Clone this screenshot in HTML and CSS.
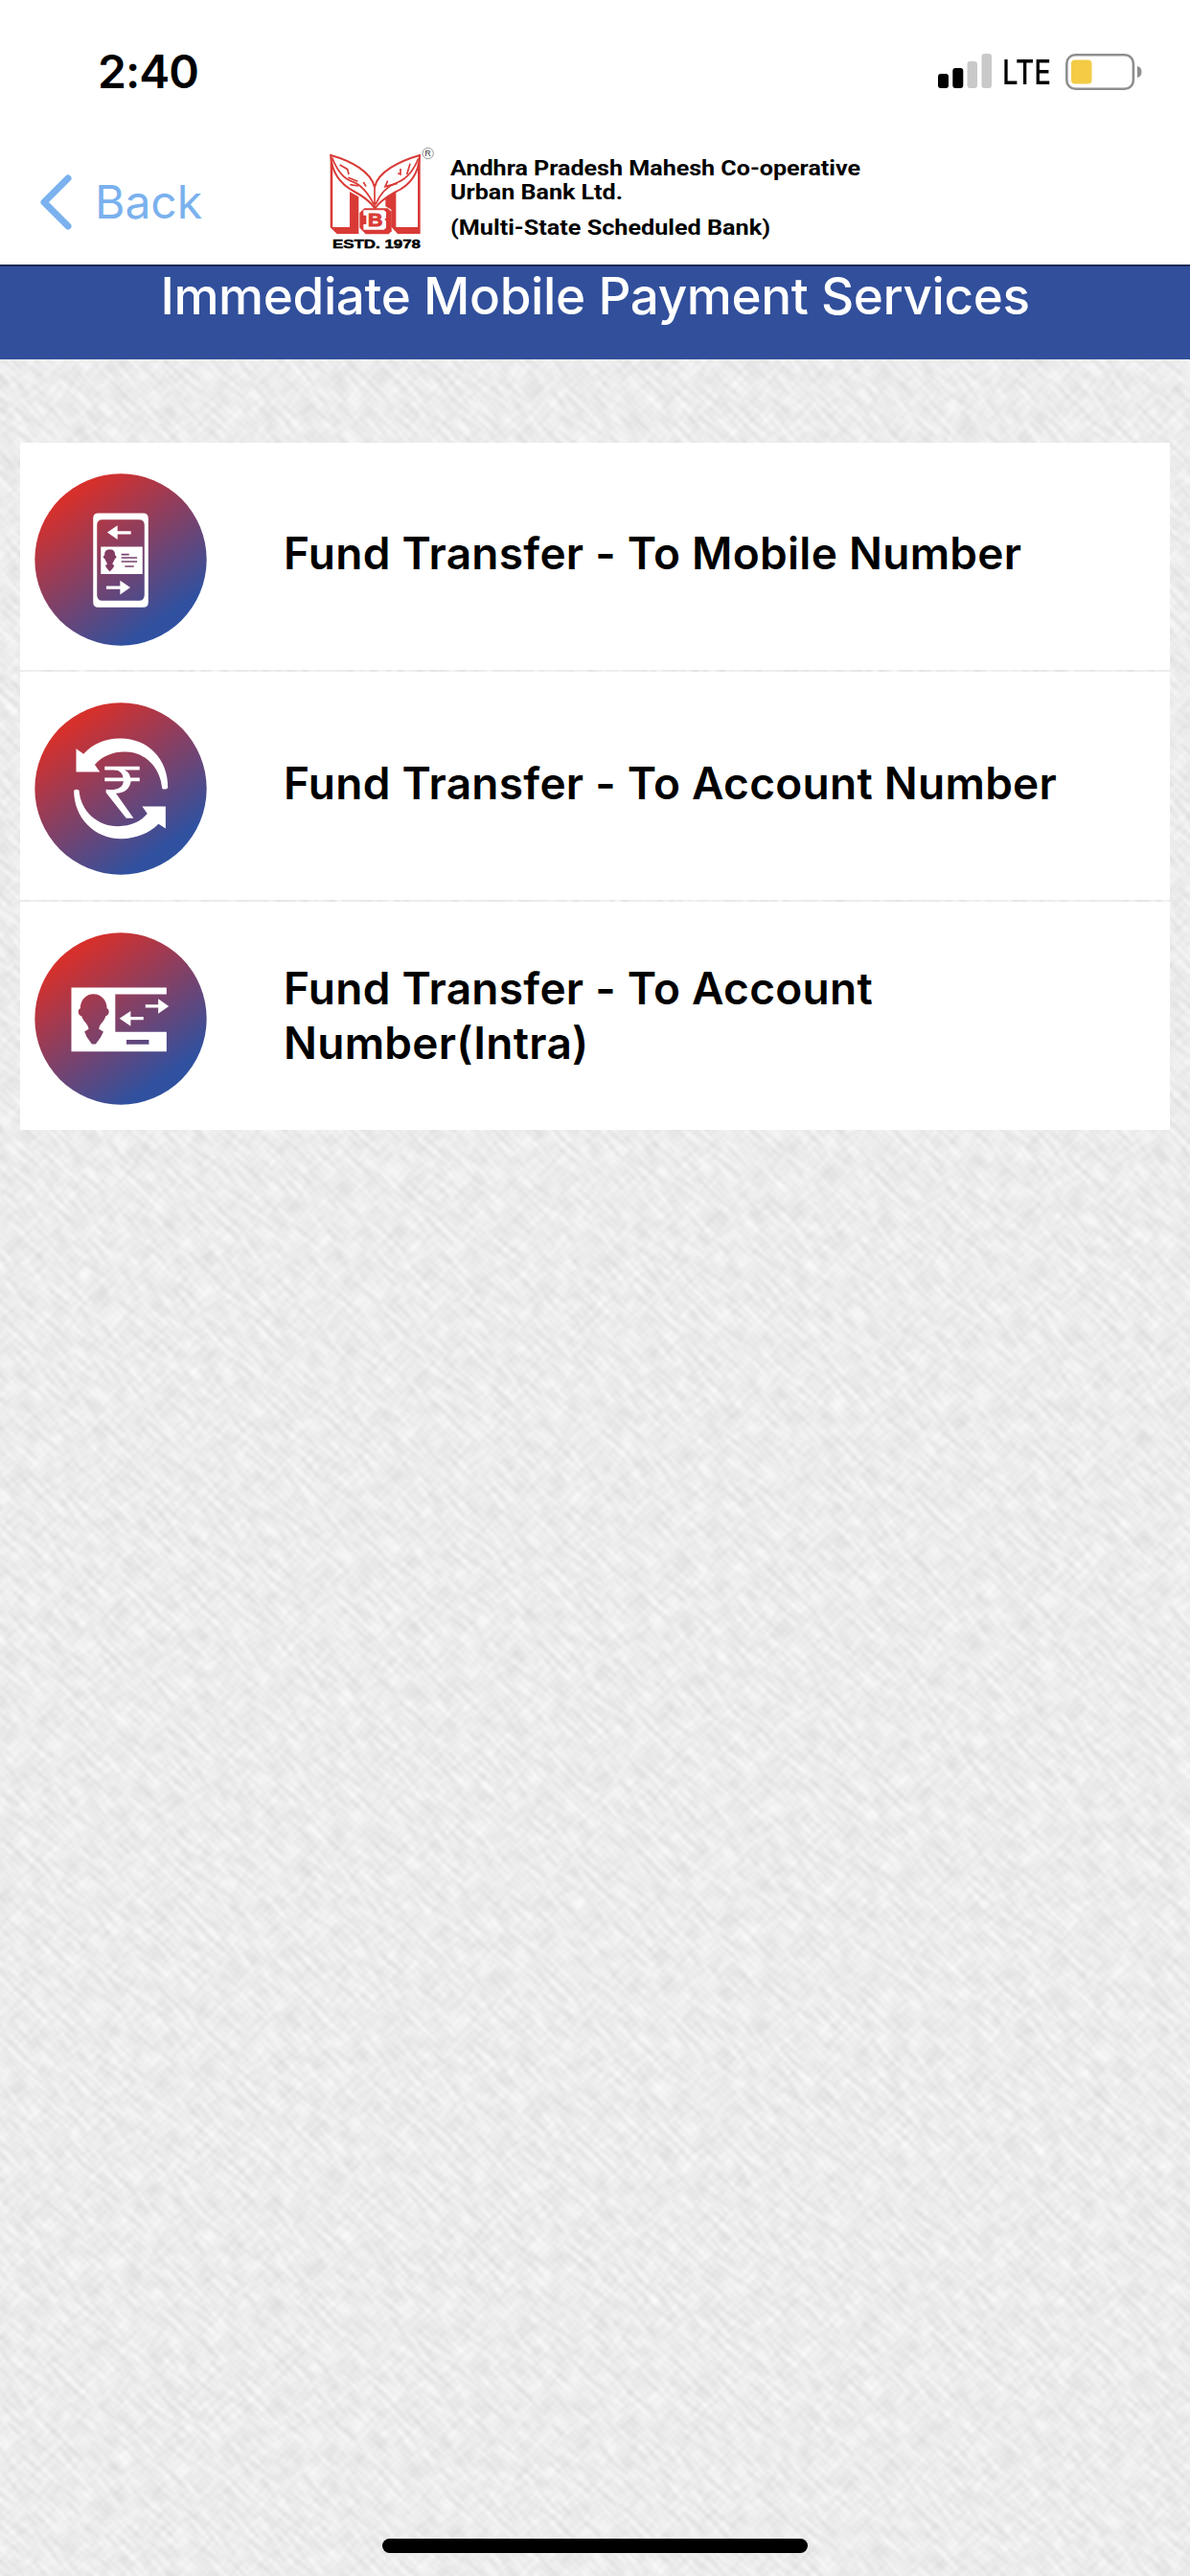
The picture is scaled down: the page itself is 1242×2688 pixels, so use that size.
FILE: index.html
```html
<!DOCTYPE html>
<html lang="en">
  <head>
    <meta charset="UTF-8" />
    <meta name="viewport" content="width=device-width, initial-scale=1.0" />
    <title>Immediate Mobile Payment Services</title>
    <link rel="stylesheet" href="styles.css">
  </head>
  <body>
    <!-- woven paper background -->
    <svg class="texture" width="1242" height="2688" aria-hidden="true">
      <filter id="weaveA" x="0" y="0" width="100%" height="100%" color-interpolation-filters="sRGB">
        <feTurbulence type="fractalNoise" baseFrequency="0.04 0.2" numOctaves="1" seed="4" />
        <feColorMatrix values="0.2 0 0 0 0.825  0.2 0 0 0 0.825  0.2 0 0 0 0.825  0 0 0 0 1" />
      </filter>
      <filter id="weaveB" x="0" y="0" width="100%" height="100%" color-interpolation-filters="sRGB">
        <feTurbulence type="fractalNoise" baseFrequency="0.2 0.05" numOctaves="1" seed="9" />
        <feColorMatrix values="0.2 0 0 0 0.825  0.2 0 0 0 0.825  0.2 0 0 0 0.825  0 0 0 0 0.35" />
      </filter>
      <g transform="rotate(45 621 1344)">
        <rect x="-900" y="-200" width="3100" height="3100" filter="url(#weaveA)" />
        <rect x="-900" y="-200" width="3100" height="3100" filter="url(#weaveB)" />
      </g>
    </svg>

    <div class="status">
      <span class="time">2:40</span>
      <div class="indicators">
        <svg class="signal" viewBox="0 0 57 36">
          <rect x="0" y="21" width="11" height="15" rx="3" />
          <rect x="15.3" y="15" width="11" height="21" rx="3" />
          <rect class="off" x="30.5" y="8" width="10.5" height="28" rx="3" />
          <rect class="off" x="45.5" y="0" width="10.5" height="36" rx="3" />
        </svg>
        <span class="network">LTE</span>
        <svg class="battery" viewBox="0 0 80 38">
          <rect x="1.3" y="1.3" width="69.6" height="35.4" rx="9" fill="#fff" stroke="#8e8e8e" stroke-width="2.6" />
          <rect x="6" y="6.5" width="21.5" height="25" rx="4" fill="#f4cb45" />
          <path d="M75 13q4.500 1 4.500 6t-4.500 6z" fill="#8e8e8e" />
        </svg>
      </div>
    </div>

    <header class="header">
      <a class="back" href="#">
        <svg viewBox="0 0 34 58"><path d="M30 4L5 29l25 25" /></svg>
        <span>Back</span>
      </a>
      <svg class="brand" viewBox="60 30 1710 360">
        <g fill="#d93a36">
          <path d="M74 62l8 8V291h53V180l28 16V312H95L74 292z" />
          <path d="M356 62l-8 8V291h-68V180l-33 16v30l18 10v54l20 22h71z" />
          <path d="M181 232h73l12 11v61l-9 9h-72l-19-20v-47z" />
        </g>
        <path d="M83 110L134 172V290H83z M297 176L345 112V290H297z" fill="#fff" />
        <path d="M76 66C140 84 202 118 213 166 222 118 292 84 354 66 352 120 326 160 276 182 244 200 226 216 214 232 200 212 180 196 150 180 108 158 78 120 76 66z" fill="#fff" stroke="#d93a36" stroke-width="6" />
        <path d="M213 160V228M80 74Q104 136 142 148T211 220M350 76Q326 136 282 152T216 220" fill="none" stroke="#d93a36" stroke-width="5" />
        <path d="M104 96l24 14 4 16M130 136l30 12M136 158l26 4M178 150l8 14M324 92l-10 34M294 108v18l-8-4M254 146l-8 18 38-10" fill="none" stroke="#d93a36" stroke-width="5" />
        <path d="M178 238h64l7 6v18l-5 5 5 5v21l-7 6h-64v-17h9v-28h-9z" fill="#fff" />
        <text x="192" y="289" class="mark-b" textLength="46" lengthAdjust="spacingAndGlyphs">B</text>
        <text x="81" y="357" class="estd" textLength="276" lengthAdjust="spacingAndGlyphs">ESTD. 1978</text>
        <circle cx="380" cy="60" r="17" fill="none" stroke="#666" stroke-width="2" />
        <text x="370" y="70" class="reg">R</text>
        <g class="bank-name">
          <text x="450" y="129" textLength="1284" lengthAdjust="spacingAndGlyphs">Andhra Pradesh Mahesh Co-operative</text>
          <text x="450" y="204" textLength="540" lengthAdjust="spacingAndGlyphs">Urban Bank Ltd.</text>
          <text x="450" y="315" textLength="1002" lengthAdjust="spacingAndGlyphs">(Multi-State Scheduled Bank)</text>
        </g>
      </svg>
    </header>

    <h1 class="title">Immediate Mobile Payment Services</h1>

    <ul class="menu">
      <li>
        <svg class="icon" viewBox="50 131 538 538">
          <defs>
            <linearGradient id="disc" gradientUnits="userSpaceOnUse" x1="145" y1="215" x2="420" y2="610">
              <stop offset="0" stop-color="#d6302c" />
              <stop offset="1" stop-color="#2f51a0" />
            </linearGradient>
          </defs>
          <circle cx="319" cy="400" r="268" fill="url(#disc)" />
          <path fill="#fff" fill-rule="evenodd" d="M249 255H389Q405 255 405 271V533Q405 549 389 549H249Q233 549 233 533V271Q233 255 249 255zM262 275Q245 275 245 292V510Q245 528 262 528H376Q393 528 393 510V292Q393 275 376 275z" />
          <path fill="#fff" d="M277 315l32-22v18h42v10h-42v16zM349 487l-32-22v17h-43v10h43v17zM257 360H387V445H257z" />
          <path fill="#833b62" d="M285 368c13 0 17 9 16 18 6 2 6 9 0 11-2 7-7 11-8 17l6 4-4 8-10 11-10-11-4-8 6-4c-1-6-6-10-8-17-6-2-6-9 0-11-1-9 3-18 16-18z" />
          <path stroke="#75406c" stroke-width="5" d="M321 384h24M321 394h49M321 406h49M332 421h28" />
        </svg>
        <span>Fund Transfer - To Mobile Number</span>
      </li>
      <li>
        <svg class="icon" viewBox="50 131 538 538">
          <circle cx="319" cy="400" r="268" fill="url(#disc)" />
          <g fill="#fff">
            <path d="M180 275L203 292C233 257 277 242 319 243 402 243 468 306 466 398Q457 405 448 399C443 335 397 286 334 285 296 284 262 298 238 325L254 348H180z" />
            <path d="M459 524L437 510C407 540 363 557 319 556 237 555 172 490 173 405Q181 399 189 405C194 470 246 517 311 517 351 517 382 502 402 478L386 455H459z" />
          </g>
          <path fill="none" stroke="#fff" stroke-width="11" d="M269 336H378M269 371H378" />
          <path fill="#fff" d="M269 336H315Q348 342 351 373C350 400 328 415 304 414L359 492H336L273 412V402C303 406 327 400 328 373Q327 342 296 340z" />
        </svg>
        <span>Fund Transfer - To Account Number</span>
      </li>
      <li>
        <svg class="icon" viewBox="50 131 538 538">
          <circle cx="319" cy="400" r="268" fill="url(#disc)" />
          <path fill="#fff" fill-rule="evenodd" d="M165 303H462V324H302V441H462V502H165zM234 323C211 323 193 341 193 368 184 371 184 389 197 392 202 410 217 415 219 432L206 440 213 457 229 479H241L257 457 265 440 251 432C253 415 268 410 272 392 285 389 285 371 276 368 276 341 257 323 234 323zM337 466V480H407V466z" />
          <path fill="#fff" d="M469 361L436 338v18H396v10H436v18zM315 399L350 376v18H390v10H350v19z" />
        </svg>
        <span class="two-line">Fund Transfer - To Account Number(Intra)</span>
      </li>
    </ul>

    <div class="home-bar"></div>
  </body>
</html>
```

FILE: styles.css
```css
* {
  box-sizing: border-box;
}
body {
  display: flex;
  flex-direction: column;
  position: relative;
  width: 1242px;
  height: 2688px;
  margin: 0;
  overflow: hidden;
  font-family: Inter, "Liberation Sans", sans-serif;
  color: #000;
  background-color: #ebebeb;
}
.texture {
  position: absolute;
  top: 0;
  left: 0;
  z-index: -1;
}
.status {
  display: flex;
  justify-content: space-between;
  height: 150px;
  padding: 45px 50px 0 102px;
  background-color: #fff;
}
.time {
  font-size: 48px;
  font-weight: 600;
  letter-spacing: -1px;
  line-height: 60px;
}
.indicators {
  display: flex;
  align-items: flex-start;
  padding-top: 11px;
}
.signal {
  width: 57px;
  height: 36px;
}
.signal .off {
  fill: #c9c9c9;
}
.network {
  width: 53px;
  margin: -1px 13px 0 10px;
  font-size: 36px;
  font-weight: 500;
  line-height: 40px;
  transform: scaleX(0.82);
  transform-origin: left;
}
.battery {
  width: 80px;
  height: 38px;
}
.header {
  display: flex;
  height: 126px;
  padding-left: 41px;
  background-color: #fff;
}
.back {
  display: flex;
  width: 299px;
  padding-top: 32px;
  color: #7ab1ee;
  font-size: 48px;
  line-height: 58px;
  text-decoration: none;
}
.back svg {
  width: 34px;
  height: 58px;
  margin-right: 24px;
  fill: none;
  stroke: #7ab1ee;
  stroke-width: 7;
  stroke-linecap: round;
  stroke-linejoin: round;
}
.brand {
  width: 570px;
  height: 120px;
}
.mark-b {
  font: bold 54px "Liberation Sans", sans-serif;
  fill: #d93a36;
  stroke: #d93a36;
  stroke-width: 3;
}
.estd {
  font: bold 41px "Liberation Sans", sans-serif;
  stroke: #000;
  stroke-width: 1.5;
}
.reg {
  font: 27px "Liberation Sans", sans-serif;
  fill: #333;
}
.bank-name {
  font: bold 65px Roboto, sans-serif;
}
.title {
  height: 99px;
  margin: 0;
  border-top: 2px solid #1d2b55;
  color: #fff;
  background-color: #314f9b;
  font-size: 53px;
  font-weight: 500;
  letter-spacing: -0.4px;
  line-height: 62px;
  text-align: center;
}
.menu {
  display: flex;
  flex-direction: column;
  gap: 2px;
  margin: 87px 21px 0;
  padding: 0;
  list-style: none;
}
.menu li {
  display: flex;
  align-items: center;
  height: 238px;
  padding-left: 15px;
  background-color: #fff;
}
.menu li:first-child {
  height: 237px;
}
.icon {
  width: 180px;
  height: 180px;
  margin: 6px 80px 0 0;
}
.menu span {
  width: 860px;
  padding-bottom: 6px;
  font-size: 46px;
  font-weight: 600;
  letter-spacing: 0.28px;
  line-height: 57px;
}
.menu .two-line {
  padding-bottom: 0;
}
.home-bar {
  width: 444px;
  height: 15px;
  margin: auto auto 24px;
  border-radius: 8px;
  background-color: #000;
}
```
